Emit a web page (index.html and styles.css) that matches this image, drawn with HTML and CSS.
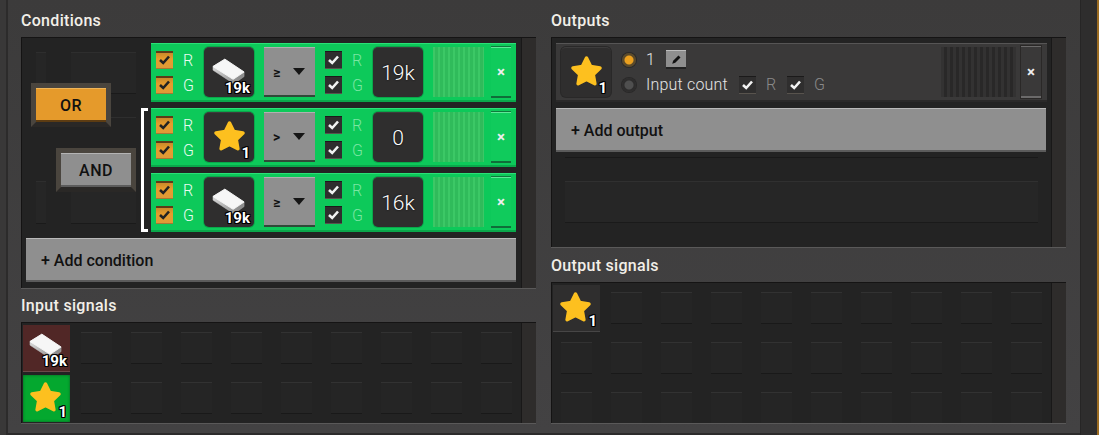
FILE: index.html
```html
<!DOCTYPE html>
<html lang="en">
<head>
    <meta charset="utf-8">
    <title>Decider combinator</title>
    <link rel="stylesheet" href="styles.css">
</head>
<body>
    <svg class="defs" width="0" height="0">
        <defs>
            <linearGradient id="plate-side" x1="0" y1="0" x2="1" y2="0.4">
                <stop offset="0" stop-color="#e2e2e2"/>
                <stop offset="1" stop-color="#8c8c8c"/>
            </linearGradient>
        </defs>
        <symbol id="star" viewBox="0 0 30 30">
            <path d="M15 3.5 18.6 10.8 26.6 12 20.8 17.6 22.2 25.5 15 21.8 7.8 25.5 9.2 17.6 3.4 12 11.4 10.8Z" fill="#fdc01f" stroke="#fdc01f" stroke-width="3" stroke-linejoin="round"/>
        </symbol>
        <symbol id="plate" viewBox="0 0 36 30">
            <path d="M1 9 1 13 24 28 35 20 35 15 14 1Z" fill="url(#plate-side)" stroke="#b5b5b5" stroke-width="0.5" stroke-linejoin="round"/>
            <path d="M1 9 14 1 35 15 23 23Z" fill="#f6f6f6" stroke="#f6f6f6" stroke-linejoin="round"/>
        </symbol>
        <symbol id="tick" viewBox="0 0 17 17">
            <path d="M4 9 7.2 12 13 5.5" fill="none" stroke="currentColor" stroke-width="2.6"/>
        </symbol>
    </svg>

    <div class="frame">
        <div class="frame-left"></div>
        <div class="panel">
            <section class="column">
                <h2 class="title title-first">Conditions</h2>
                <div class="inset">
                    <div class="inset-body conditions">
                        <div class="cond-top">
                            <div class="tree">
                                <div class="tree-buttons">
                                    <button class="logic logic-or">OR</button>
                                    <button class="logic logic-and">AND</button>
                                </div>
                                <div class="bracket"></div>
                            </div>
                            <div class="rows">
                                <div class="cond-row">
                                    <div class="wires">
                                        <span class="check check-on"><svg><use href="#tick"/></svg></span><span class="wire">R</span>
                                        <span class="check check-on"><svg><use href="#tick"/></svg></span><span class="wire">G</span>
                                    </div>
                                    <div class="tile"><svg class="plate"><use href="#plate"/></svg><span class="count">19k</span></div>
                                    <div class="compare"><span>≥</span><i class="arrow"></i></div>
                                    <div class="wires wires-off">
                                        <span class="check"><svg><use href="#tick"/></svg></span><span class="wire">R</span>
                                        <span class="check"><svg><use href="#tick"/></svg></span><span class="wire">G</span>
                                    </div>
                                    <div class="tile tile-value">19k</div>
                                    <div class="stripes"></div>
                                    <button class="close">×</button>
                                </div>
                                <div class="cond-row">
                                    <div class="wires">
                                        <span class="check check-on"><svg><use href="#tick"/></svg></span><span class="wire">R</span>
                                        <span class="check check-on"><svg><use href="#tick"/></svg></span><span class="wire">G</span>
                                    </div>
                                    <div class="tile"><svg class="star"><use href="#star"/></svg><span class="count">1</span></div>
                                    <div class="compare"><span>&gt;</span><i class="arrow"></i></div>
                                    <div class="wires wires-off">
                                        <span class="check"><svg><use href="#tick"/></svg></span><span class="wire">R</span>
                                        <span class="check"><svg><use href="#tick"/></svg></span><span class="wire">G</span>
                                    </div>
                                    <div class="tile tile-value">0</div>
                                    <div class="stripes"></div>
                                    <button class="close">×</button>
                                </div>
                                <div class="cond-row">
                                    <div class="wires">
                                        <span class="check check-on"><svg><use href="#tick"/></svg></span><span class="wire">R</span>
                                        <span class="check check-on"><svg><use href="#tick"/></svg></span><span class="wire">G</span>
                                    </div>
                                    <div class="tile"><svg class="plate"><use href="#plate"/></svg><span class="count">19k</span></div>
                                    <div class="compare"><span>≥</span><i class="arrow"></i></div>
                                    <div class="wires wires-off">
                                        <span class="check"><svg><use href="#tick"/></svg></span><span class="wire">R</span>
                                        <span class="check"><svg><use href="#tick"/></svg></span><span class="wire">G</span>
                                    </div>
                                    <div class="tile tile-value">16k</div>
                                    <div class="stripes"></div>
                                    <button class="close">×</button>
                                </div>
                            </div>
                        </div>
                        <button class="add">+ Add condition</button>
                    </div>
                    <div class="gutter"></div>
                </div>

                <h2 class="title title-input">Input signals</h2>
                <div class="inset inset-input">
                    <div class="inset-body signals">
                        <div class="cell"><div class="signal signal-red"><svg class="plate"><use href="#plate"/></svg><span class="count">19k</span></div></div>
                        <div class="cell"><i></i></div><div class="cell"><i></i></div><div class="cell"><i></i></div><div class="cell"><i></i></div>
                        <div class="cell"><i></i></div><div class="cell"><i></i></div><div class="cell"><i></i></div><div class="cell"><i></i></div><div class="cell"><i></i></div>
                        <div class="cell"><div class="signal signal-green"><svg class="star"><use href="#star"/></svg><span class="count">1</span></div></div>
                        <div class="cell"><i></i></div><div class="cell"><i></i></div><div class="cell"><i></i></div><div class="cell"><i></i></div>
                        <div class="cell"><i></i></div><div class="cell"><i></i></div><div class="cell"><i></i></div><div class="cell"><i></i></div><div class="cell"><i></i></div>
                    </div>
                    <div class="gutter"></div>
                </div>
            </section>

            <section class="column">
                <h2 class="title title-first">Outputs</h2>
                <div class="inset inset-outputs">
                    <div class="inset-body outputs">
                        <div class="out-row">
                            <div class="tile"><svg class="star"><use href="#star"/></svg><span class="count">1</span></div>
                            <div class="out-options">
                                <div class="out-line">
                                    <span class="radio radio-on"></span>
                                    <span class="out-text">1</span>
                                    <button class="edit"><svg viewBox="0 0 20 17"><path d="M6 13.5 7 10.3 12.6 4.7 14.8 6.9 9.2 12.5Z" fill="#111"/></svg></button>
                                </div>
                                <div class="out-line">
                                    <span class="radio"></span>
                                    <span class="out-text">Input count</span>
                                    <span class="check check-first"><svg><use href="#tick"/></svg></span><span class="wire">R</span>
                                    <span class="check"><svg><use href="#tick"/></svg></span><span class="wire">G</span>
                                </div>
                            </div>
                            <div class="stripes"></div>
                            <button class="close">×</button>
                        </div>
                        <button class="add">+ Add output</button>
                        <div class="strip-line"></div>
                        <div class="strip"></div>
                    </div>
                    <div class="gutter"></div>
                </div>

                <h2 class="title title-output">Output signals</h2>
                <div class="inset inset-signals">
                    <div class="inset-body signals">
                        <div class="cell"><div class="signal signal-plain"><svg class="star"><use href="#star"/></svg><span class="count">1</span></div></div>
                        <div class="cell"><i></i></div><div class="cell"><i></i></div><div class="cell"><i></i></div><div class="cell"><i></i></div>
                        <div class="cell"><i></i></div><div class="cell"><i></i></div><div class="cell"><i></i></div><div class="cell"><i></i></div><div class="cell"><i></i></div>
                        <div class="cell"><i></i></div><div class="cell"><i></i></div><div class="cell"><i></i></div><div class="cell"><i></i></div><div class="cell"><i></i></div>
                        <div class="cell"><i></i></div><div class="cell"><i></i></div><div class="cell"><i></i></div><div class="cell"><i></i></div><div class="cell"><i></i></div>
                        <div class="cell"><i></i></div><div class="cell"><i></i></div><div class="cell"><i></i></div><div class="cell"><i></i></div><div class="cell"><i></i></div>
                        <div class="cell"><i></i></div><div class="cell"><i></i></div><div class="cell"><i></i></div><div class="cell"><i></i></div><div class="cell"><i></i></div>
                    </div>
                    <div class="gutter"></div>
                </div>
            </section>
        </div>
        <div class="frame-right"></div>
    </div>
</body>
</html>
```
FILE: styles.css
```css
* {
    margin: 0;
    box-sizing: border-box;
}
html, body {
    height: 100%;
    overflow: hidden;
}
body {
    background-color: #3e3d3e;
    font-family: "Roboto", "Liberation Sans", sans-serif;
    color: #fff;
}
button {
    font-family: inherit;
    border: 0;
    padding: 0;
}
.defs {
    display: block;
    height: 0;
}

/* outer window */
.frame {
    display: flex;
    height: 435px;
}
.frame-left {
    width: 8px;
    background-color: #393838;
    border-right: 2px solid #2c2b2b;
}
.panel {
    width: 1072px;
    display: flex;
    gap: 15px;
    padding-left: 13px;
    background: linear-gradient(#3c3b3b, #434243);
    border-bottom: 2px solid #2c2b2b;
}
.frame-right {
    width: 19px;
    background-color: #2e2d2d;
    border-left: 1px solid #262525;
    border-right: 2px solid #9c6c22;
}
.column {
    width: 515px;
}

.title {
    font-size: 16px;
    font-weight: 500;
    letter-spacing: 0.3px;
    line-height: 20px;
    color: #f2efe8;
}
.title-first {
    padding-top: 11px;
    height: 37px;
}
.title-input {
    padding-top: 8px;
    height: 34px;
}
.title-output {
    padding-top: 9px;
    height: 35px;
}

/* dark sunken areas */
.inset {
    display: flex;
    height: 251px;
    border-top: 1px solid #151414;
    box-shadow: 0 1px 0 #5a5959;
}
.inset-input {
    height: 101px;
}
.inset-outputs {
    height: 210px;
}
.inset-signals {
    height: 141px;
}
.inset-body {
    width: 500px;
    background-color: #232323;
    border-left: 1px solid #141313;
    overflow: hidden;
}
.gutter {
    width: 15px;
    background-color: #2e2c2b;
    border-left: 1px solid #191818;
}

/* conditions */
.conditions {
    padding: 5px 4px 0;
}
.cond-top {
    display: flex;
    height: 189px;
}
.tree {
    width: 125px;
    display: flex;
    background:
        linear-gradient(#2e2e2e, #2e2e2e) 10px 9px / 10px 1px no-repeat,
        linear-gradient(#2e2e2e, #2e2e2e) 45px 9px / 65px 1px no-repeat,
        linear-gradient(#1a1a1a, #1a1a1a) 45px 50px / 65px 1px no-repeat,
        linear-gradient(#2e2e2e, #2e2e2e) 85px 74px / 25px 1px no-repeat,
        linear-gradient(#2e2e2e, #2e2e2e) 10px 138px / 10px 1px no-repeat,
        linear-gradient(#1a1a1a, #1a1a1a) 10px 180px / 10px 1px no-repeat,
        linear-gradient(#1a1a1a, #1a1a1a) 45px 180px / 65px 1px no-repeat,
        linear-gradient(#262626, #262626) 10px 9px / 10px 74px no-repeat,
        linear-gradient(#262626, #262626) 45px 9px / 65px 41px no-repeat,
        linear-gradient(#262626, #262626) 10px 138px / 10px 42px no-repeat,
        linear-gradient(#262626, #262626) 45px 149px / 65px 31px no-repeat;
}
.tree-buttons {
    width: 115px;
    padding: 40px 0 0 5px;
}
.logic {
    display: block;
    width: 80px;
    height: 44px;
    border: 5px solid #4a453e;
    border-bottom-color: #2a2826;
    font-size: 16px;
    font-weight: 500;
    letter-spacing: 0.5px;
    color: #111;
}
.logic-or {
    background-color: #e59a2b;
    box-shadow: inset 0 1px 0 #f0b558, inset 0 -2px 0 #5d3c12;
}
.logic-and {
    margin: 21px 0 0 25px;
    background-color: #8f8f8f;
    box-shadow: inset 0 1px 0 #b4b4b4, inset 0 -2px 0 #5c5c5c;
}
.bracket {
    width: 7px;
    height: 124px;
    margin-top: 65px;
    border: 3px solid #fff;
    border-right: 0;
}
.rows {
    width: 365px;
    display: flex;
    flex-direction: column;
    gap: 6px;
}
.cond-row {
    height: 59px;
    display: flex;
    align-items: center;
    padding: 0 5px;
    background-color: #0dc95a;
    border-top: 1px solid #2be077;
    border-bottom: 2px solid #0aa84b;
}

.wires {
    width: 38px;
    display: grid;
    grid-template-columns: 17px 21px;
    grid-auto-rows: 17px;
    row-gap: 8px;
    margin-right: 10px;
}
.wires-off .wire {
    color: #7be6a3;
}
.wire {
    padding-left: 10px;
    font-size: 16px;
    font-weight: 300;
    line-height: 19px;
    color: #eafbf0;
}
.check {
    display: block;
    width: 17px;
    height: 17px;
    color: #f2f2f2;
    background-color: #2f2e2e;
    border-top: 1px solid #1b1a1a;
    box-shadow: 0 1px 0 #58534d;
}
.check svg {
    display: block;
    width: 17px;
    height: 17px;
    margin-top: -1px;
}
.check-on {
    color: #232323;
    background: linear-gradient(#c98a2a, #e79c2c 40%, #dd9a38);
    border-top: 2px solid #5c3c18;
    box-shadow: 0 1px 0 #a77733;
}
.check-on svg {
    margin-top: -2px;
}

.tile {
    position: relative;
    width: 50px;
    height: 50px;
    flex: none;
    background-color: #2f2e2e;
    border-radius: 5px;
    border-top: 1px solid #3d3c3c;
    box-shadow: 0 0 0 1px #0aa84b;
    margin-right: 10px;
}
.tile-value {
    font-size: 21px;
    line-height: 50px;
    text-align: center;
    text-shadow: 0 0 2px #000;
    font-weight: 300;
}
.plate {
    position: absolute;
    left: 8px;
    top: 10px;
    width: 33px;
    height: 28px;
}
.star {
    position: absolute;
    left: 8px;
    top: 6px;
    width: 35px;
    height: 35px;
}
.count {
    position: absolute;
    right: 4px;
    bottom: 1px;
    font-size: 15px;
    font-weight: 700;
    line-height: 16px;
    color: #fff;
    text-shadow: 1px 0 0 #000, -1px 0 0 #000, 0 1px 0 #000, 0 -1px 0 #000, 1px 1px 0 #000, -1px -1px 0 #000, 1px -1px 0 #000, -1px 1px 0 #000;
}

.compare {
    width: 51px;
    height: 50px;
    flex: none;
    display: flex;
    align-items: center;
    gap: 11px;
    padding-left: 9px;
    margin-right: 10px;
    background-color: #8f8f8f;
    border-top: 1px solid #b0b0b0;
    border-bottom: 2px solid #2f4a38;
    font-size: 14px;
    font-weight: 700;
    color: #111;
}
.compare span {
    width: 9px;
}
.arrow {
    width: 0;
    height: 0;
    border-left: 6px solid transparent;
    border-right: 6px solid transparent;
    border-top: 7px solid #151515;
}

.stripes {
    width: 51px;
    height: 50px;
    flex: none;
    margin-right: 7px;
    background: repeating-linear-gradient(90deg, #3cc866 0 2px, #30bb5b 2px 5px);
}
.close {
    width: 20px;
    height: 52px;
    flex: none;
    background-color: #10cb5c;
    border-top: 1px solid #0f7a3d;
    border-bottom: 2px solid #0f6e39;
    box-shadow: inset 0 1px 0 #5fe897;
    font-size: 15px;
    font-weight: 700;
    line-height: 46px;
    color: #eee;
}

.add {
    display: block;
    width: 490px;
    height: 44px;
    text-align: left;
    padding: 1px 0 0 15px;
    background-color: #8f8f8f;
    border-top: 1px solid #b9b9b9;
    border-bottom: 2px solid #5b5b5b;
    font-size: 16px;
    font-weight: 500;
    color: #111;
}
.conditions .add {
    margin-top: 6px;
}

/* outputs */
.outputs {
    padding: 5px 4px 0;
}
.out-row {
    height: 59px;
    display: flex;
    align-items: center;
    padding: 0 5px;
    margin-bottom: 6px;
    background-color: #3a3939;
    border-top: 1px solid #565555;
    border-bottom: 2px solid #2a2929;
}
.out-row .tile {
    box-shadow: 0 0 0 1px #292828;
    margin-right: 11px;
}
.out-options {
    width: 319px;
    font-size: 16px;
    font-weight: 300;
}
.out-line {
    height: 25px;
    display: flex;
    align-items: center;
}
.radio {
    width: 14px;
    height: 14px;
    flex: none;
    border-radius: 50%;
    margin-right: 10px;
    background: radial-gradient(circle, #4f4f4f 0 4px, #2e2d2d 5px);
    box-shadow: 0 0 0 1px #292828;
}
.radio-on {
    background: radial-gradient(circle, #eba01f 0 4px, #5b4a2a 5px);
}
.out-text {
    color: #e4e4e4;
    letter-spacing: 0.2px;
    line-height: 22px;
}
.edit {
    width: 20px;
    height: 19px;
    margin-left: 11px;
    background-color: #8f8f8f;
    border-top: 1px solid #bdbdbd;
    border-bottom: 2px solid #222;
}
.edit svg {
    display: block;
    width: 20px;
    height: 16px;
}
.check-first {
    margin-left: 11px;
}
.out-line .wire {
    width: 31px;
    color: #8a8a8a;
}
.out-row .stripes {
    width: 75px;
    flex: none;
    margin-right: 5px;
    background: repeating-linear-gradient(90deg, #333232 0 3px, #292828 3px 6px);
}
.out-row .close {
    background-color: #3a3939;
    border-top-color: #6b6a6a;
    border-bottom-color: #6b6a6a;
    box-shadow: 0 0 0 1px #2a2827;
}
.strip-line {
    height: 1px;
    margin: 5px 9px 0;
    background-color: #191919;
}
.strip {
    height: 42px;
    margin: 23px 9px 0;
    background-color: #262626;
    border-top: 1px solid #303030;
    border-bottom: 1px solid #1a1a1a;
}

/* signal grids */
.signals {
    display: grid;
    grid-template-columns: repeat(10, 50px);
    grid-auto-rows: 50px;
}
.cell {
    padding: 9px 0 0 9px;
}
.cell i {
    display: block;
    width: 31px;
    height: 32px;
    background-color: #252525;
    border-top: 1px solid #323232;
    border-bottom: 1px solid #191919;
}
.cell:has(.signal) {
    padding: 2px 0 0 1px;
}
.signal {
    position: relative;
    width: 47px;
    height: 47px;
}
.signal-red {
    background-color: #512726;
    border-bottom: 1px solid #6b4a49;
}
.signal-green {
    background-color: #04a82f;
    box-shadow: inset 0 0 3px #0b5f22;
}
.signal-plain {
    background-color: #2f2e2e;
    border-bottom: 1px solid #474646;
}
.signal .plate {
    left: 6px;
    top: 8px;
}
.signal .star {
    left: 5px;
    top: 5px;
}
.signal .count {
    right: 3px;
    bottom: 2px;
}
```
